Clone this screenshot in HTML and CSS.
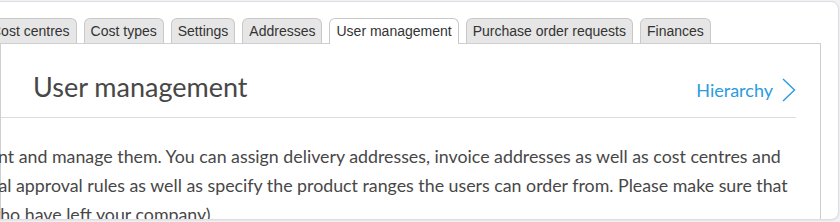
FILE: index.html
```html
<!DOCTYPE html>
<html>
<head>
<meta charset="utf-8">
<link rel="stylesheet" href="styles.css">
</head>
<body>
<div class="frame">
  <div class="tabs">
    <div class="tab">Cost centres</div>
    <div class="tab">Cost types</div>
    <div class="tab">Settings</div>
    <div class="tab">Addresses</div>
    <div class="tab active">User management</div>
    <div class="tab">Purchase order requests</div>
    <div class="tab">Finances</div>
  </div>
  <div class="panel">
    <div class="panel-head">
      <h1 class="title">User management</h1>
      <a class="link" href="#">Hierarchy<svg class="chev" width="14" height="24" viewBox="0 0 14 24"><path d="M1 1 L12.5 12 L1 23" fill="none" stroke="#2b9be0" stroke-width="1.4"/></svg></a>
    </div>
    <div class="desc">
      <div class="line l1">account and manage them. You can assign delivery addresses, invoice addresses as well as cost centres and</div>
      <div class="line l2">individual approval rules as well as specify the product ranges the users can order from. Please make sure that</div>
      <div class="line l3">who have left your company).</div>
    </div>
  </div>
</div>
</body>
</html>
```
FILE: styles.css
```css
html, body {
  margin: 0;
  padding: 0;
  background: #ffffff;
  overflow: hidden;
}
body {
  width: 840px;
  height: 222px;
  background: #f2f2f4;
}
.frame {
  margin: 1px 1px 0 -30px;
  height: 217px;
  border: 1px solid #dcdce2;
  border-radius: 8px;
  background: #fff;
  overflow: hidden;
  box-shadow: 0 1px 2px rgba(0,0,0,0.06);
}
.tabs {
  display: flex;
  align-items: flex-end;
  gap: 7px;
  padding: 16px 0 0 13px;
  font-family: "Liberation Sans", Arial, sans-serif;
  font-size: 14px;
  color: #333;
}
.tab {
  height: 20px;
  line-height: 16px;
  padding: 4px 6px 0 6px;
  border: 1px solid #c9c9c9;
  border-bottom: none;
  border-radius: 6px 6px 0 0;
  background: #e6e6e6;
  white-space: nowrap;
}
.tab.active {
  background: #fff;
  height: 21px;
  margin-bottom: -1px;
  position: relative;
}
.panel {
  margin: 0 17px 0 29px;
  border: 1px solid #cfcfcf;
  height: 200px;
}
.panel-head {
  display: flex;
  align-items: baseline;
  justify-content: space-between;
  margin-right: 24px;
  padding: 26px 0 13px 32px;
  border-bottom: 1px solid #dcdcdc;
}
.title {
  margin: 0;
  font-family: "Lato", "Open Sans", sans-serif;
  font-weight: 400;
  font-size: 27px;
  line-height: 34px;
  color: #474747;
}
.link {
  display: flex;
  align-items: center;
  gap: 9px;
  font-family: "Lato", "Open Sans", sans-serif;
  font-size: 18px;
  color: #2b9be0;
  text-decoration: none;
}
.chev {
  display: block;
}
.desc {
  padding-top: 24px;
  font-family: "Lato", "Open Sans", sans-serif;
  font-size: 17.8px;
  line-height: 29px;
  color: #474747;
  white-space: nowrap;
}
.l1 { margin-left: -48.5px; }
.l2 { margin-left: -64.3px; }
.l3 { margin-left: -14.8px; }
```
